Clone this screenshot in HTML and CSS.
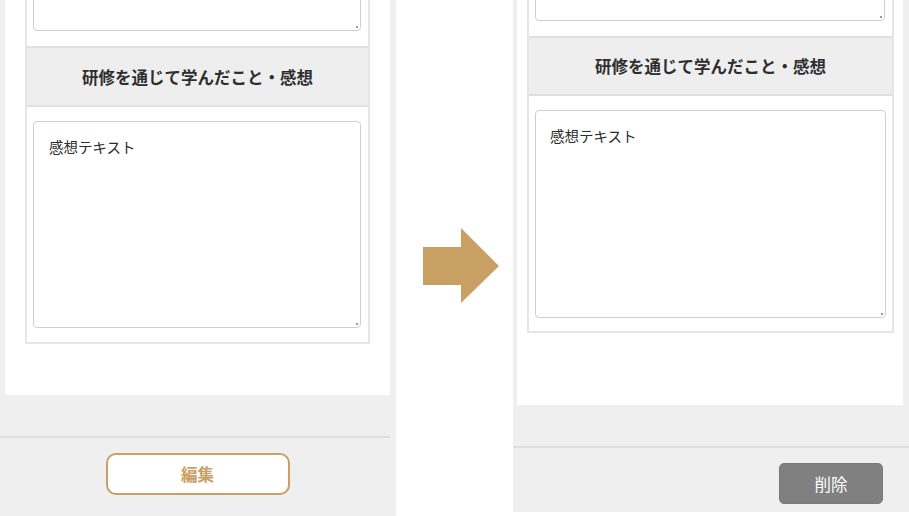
FILE: index.html
```html
<!DOCTYPE html>
<html lang="ja">
<head>
<meta charset="utf-8">
<title>編集</title>
<link rel="stylesheet" href="styles.css">
</head>
<body>
<div class="panel panel-left">
  <div class="card card-left">
    <div class="section">
      <div class="field field-top">
        <div class="ta-wrap"><textarea class="ta ta-top" readonly></textarea></div>
      </div>
      <div class="band">研修を通じて学んだこと・感想</div>
      <div class="field field-main">
        <div class="ta-wrap"><textarea class="ta ta-main" readonly>感想テキスト</textarea></div>
      </div>
    </div>
  </div>
  <div class="footer footer-left">
    <button class="btn btn-edit">編集</button>
  </div>
</div>
<div class="middle">
  <svg class="arrow" width="76" height="76" viewBox="0 0 76 76">
    <polygon points="0,19 38,19 38,0 76,38 38,75 38,57 0,57" fill="#c9a063"/>
  </svg>
</div>
<div class="panel panel-right">
  <div class="card card-right">
    <div class="section">
      <div class="field field-top">
        <div class="ta-wrap"><textarea class="ta ta-top" readonly></textarea></div>
      </div>
      <div class="band">研修を通じて学んだこと・感想</div>
      <div class="field field-main">
        <div class="ta-wrap"><textarea class="ta ta-main" readonly>感想テキスト</textarea></div>
      </div>
    </div>
  </div>
  <div class="footer footer-right">
    <button class="btn btn-delete">削除</button>
  </div>
</div>
</body>
</html>
```
FILE: styles.css
```css
html, body {
  margin: 0;
  padding: 0;
  background: #ffffff;
}
body {
  width: 909px;
  height: 516px;
  overflow: hidden;
  display: flex;
  align-items: flex-start;
  font-family: "Noto Sans CJK JP", "Noto Sans", sans-serif;
  color: #333333;
}
.panel {
  background: #efefef;
  display: flex;
  flex-direction: column;
}
.panel-left {
  width: 396px;
  height: 516px;
}
.panel-right {
  width: 396px;
  height: 512px;
}
.middle {
  width: 117px;
  height: 516px;
  box-sizing: border-box;
  padding: 228px 0 0 27px;
}
.arrow {
  display: block;
}
.card {
  background: #ffffff;
  overflow: hidden;
  box-sizing: border-box;
}
.card-left {
  margin-left: 5px;
  width: 385px;
  height: 395px;
  padding: 0 20px;
}
.card-right {
  margin-left: 4px;
  width: 386px;
  height: 405px;
  padding: 0 9px 0 10px;
}
.section {
  border: 2px solid #e6e6e6;
  margin-top: -60px;
}
.card-right .section {
  margin-top: -70px;
}
.field {
  padding: 14px 7px 15px 6px;
}
.field-main {
  padding: 14px 7px 14px 6px;
}
.card-right .field-main {
  padding: 14px 6px 13px 6px;
}
.ta-wrap {
  position: relative;
}
.ta-wrap::after {
  content: "";
  position: absolute;
  right: 3px;
  bottom: 3px;
  width: 2px;
  height: 2px;
  background: #9a9a9a;
}
.ta {
  display: block;
  width: 100%;
  box-sizing: border-box;
  border: 1px solid #cfcfcf;
  border-radius: 4px;
  background: #ffffff;
  font-family: "Noto Sans CJK JP", "Noto Sans", sans-serif;
  font-size: 14.5px;
  line-height: 20px;
  color: #2b2b2b;
  padding: 15px 15px;
  margin: 0;
  outline: none;
  resize: none;
}
.card-right .ta {
  padding: 15px 14px;
}
.ta-top {
  height: 75px;
}
.ta-main {
  height: 207px;
}
.card-right .ta-main {
  height: 208px;
}
.band {
  background: #eeeeee;
  border-top: 2px solid #e0e0e0;
  border-bottom: 2px solid #e0e0e0;
  height: 57px;
  display: flex;
  align-items: center;
  justify-content: center;
  font-size: 16.5px;
  font-weight: bold;
  color: #2e2e2e;
}
.card-right .band {
  height: 56px;
}
.footer {
  margin-top: 41px;
  border-top: 2px solid #dedede;
  display: flex;
}
.footer-left {
  width: 390px;
  padding-top: 15px;
  justify-content: center;
  box-sizing: border-box;
  padding-left: 5px;
}
.footer-right {
  padding-top: 15px;
  justify-content: flex-end;
  padding-right: 26px;
}
.btn {
  font-family: "Noto Sans CJK JP", "Noto Sans", sans-serif;
  font-size: 16.5px;
  cursor: pointer;
  box-sizing: border-box;
  margin: 0;
}
.btn-edit {
  width: 184px;
  height: 42px;
  background: #ffffff;
  border: 2px solid #c9a063;
  border-radius: 10px;
  color: #c9a063;
  font-weight: bold;
}
.btn-delete {
  width: 104px;
  height: 41px;
  background: #808080;
  border: 1px solid #7a7a7a;
  border-radius: 5px;
  color: #ffffff;
  font-weight: normal;
}
```
